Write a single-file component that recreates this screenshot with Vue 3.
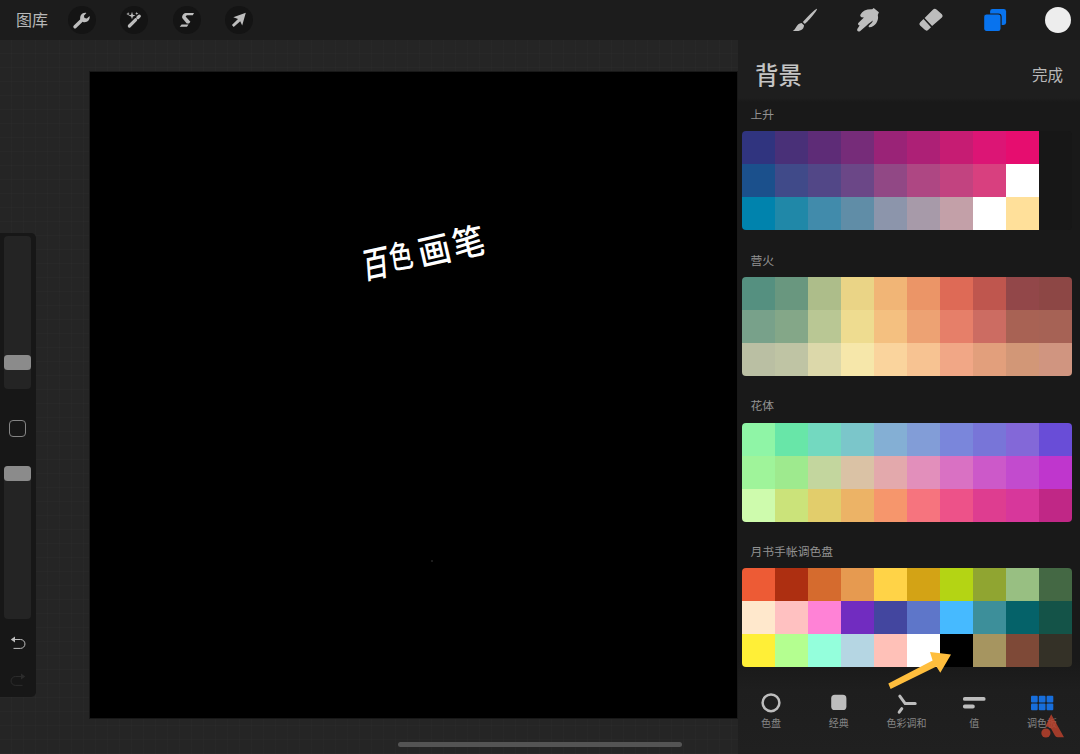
<template>
  <div class="app">
    <header class="topbar">
      <span class="gallery">图库</span>
      <div class="tools">
        <button class="tool" aria-label="操作">
          <svg viewBox="0 0 28 28">
            <path d="M7 20.8 14 14" stroke-width="3.4" stroke-linecap="round" />
            <path class="solid" d="M12.3 13.4C11.5 9.7 14.3 6 18.4 6.9L15.9 9.8 16.5 12.1 18.9 12.6 21.6 9.9C22.4 14 18.7 17 15 15.9Z" />
          </svg>
        </button>
        <button class="tool" aria-label="调整">
          <svg viewBox="0 0 28 28">
            <path d="M9.4 20 15.6 13.8M17.9 11.5 19.3 10.1" stroke-width="3.2" stroke-linecap="round" />
            <path class="solid" d="M12 5.8 12.9 8.7 15.5 9.6 12.9 10.5 12 13.2 11.1 10.5 8.4 9.6 11.1 8.7ZM8.1 6.1 8.6 7.4 9.8 7.9 8.6 8.4 8.1 9.6 7.6 8.4 6.3 7.9 7.6 7.4ZM16.8 5.7 17.2 7 18.4 7.5 17.2 8 16.8 9.1 16.3 8 15.2 7.5 16.3 7Z" />
          </svg>
        </button>
        <button class="tool" aria-label="选取">
          <svg viewBox="0 0 28 28">
            <path class="solid" d="M12.7 7.1H21L19.8 9.3H13.8L12.6 10.6 17.4 15.7 16 17.4H13.8L9.6 12.5C8.4 11.1 9.8 7.5 12.7 7.1ZM8.6 18.4H15.5L14 20.8H6.7Z" />
          </svg>
        </button>
        <button class="tool" aria-label="变换">
          <svg viewBox="0 0 28 28">
            <path class="solid" d="M20.8 6.8 17.2 19.6 15.2 15.2 8.7 20.9 6.9 19 13 12.9 8.3 11.2Z" />
          </svg>
        </button>
      </div>
      <div class="draw-tools">
        <svg viewBox="0 0 28 28">
          <path class="solid" d="M26 2.7C27 3.7 17.2 15.2 13.9 17.9L11.8 16C15 12.4 25 2 26 2.7ZM10.6 17 13 19.2C13 25 6 25.5 1.7 24.9 5.2 23.4 5 17.8 10.6 17Z" />
        </svg>
        <svg viewBox="0 0 28 28">
          <path class="solid" d="M6.5 8.6C8.4 4.8 12.6 3 18.2 3.3L19.7 2 24.9 6.2 23.8 8.9C25.3 14.6 21 20.8 15.5 21.3 14 21 14.6 19.3 16.2 18.2 18 16.8 18.9 15.4 18.6 14.5 17 16.2 14.8 17.4 13.2 19L6 25.2C4.2 26.2 2.6 24.9 3.3 23L5.6 19.4C3.8 19.4 3.5 17.6 4.8 16.6L9.9 11.5 7.4 11.2C6.2 10.7 6 9.6 6.5 8.6Z" />
        </svg>
        <svg viewBox="0 0 28 28">
          <path class="solid" d="M16.1 3.6Q17.8 2.1 19.5 3.6L24.9 8.3Q26.5 9.9 24.9 11.6L15.1 20.1 7.6 12.1ZM6.5 13.1 14 21.2 11.1 23.9Q9.5 25.4 7.8 23.8L3.1 19.5Q1.4 17.9 3.2 16.2Z" />
        </svg>
        <svg class="layers" viewBox="0 0 28 28">
          <rect x="9.1" y="3" width="16" height="16" rx="2.4" />
          <rect class="front" x="2.6" y="8" width="17.5" height="17.5" rx="2.8" />
        </svg>
        <span class="current-color"></span>
      </div>
    </header>

    <main class="workspace">
      <section class="stage">
        <aside class="sidebar">
          <div class="slider size"><span class="thumb"></span></div>
          <span class="modify"></span>
          <div class="slider opacity"><span class="thumb"></span></div>
          <svg class="undo" viewBox="0 0 18 16">
            <path d="M4 4.5H11.5A4.2 4.2 0 0 1 11.5 13.4H4.5" />
            <path class="solid" d="M1.8 4.5 6 1.4V7.6Z" />
          </svg>
          <svg class="undo redo" viewBox="0 0 18 16">
            <path d="M14 4.5H6.5A4.2 4.2 0 0 0 6.5 13.4H13.5" />
            <path class="solid" d="M16.2 4.5 12 1.4V7.6Z" />
          </svg>
        </aside>
        <div class="canvas">
          <div class="handwriting">
            <span v-for="(char, i) in '百色画笔'" :key="char" :class="'char-' + i">{{ char }}</span>
          </div>
          <i class="speck"></i>
        </div>
        <div class="home-bar"></div>
      </section>

      <section class="panel">
        <div class="panel-head">
          <h1>背景</h1>
          <span class="done">完成</span>
        </div>
        <div v-for="palette in palettes" :key="palette.name" class="palette">
          <h2>{{ palette.name }}</h2>
          <div class="swatches">
            <span v-for="(color, i) in palette.colors" :key="i" :style="{ background: color }"></span>
          </div>
        </div>
        <nav class="tabs">
          <div v-for="tab in tabs" :key="tab.name" class="tab">
            <svg viewBox="0 0 26 24" :class="tab.icon">
              <circle v-if="tab.icon === 'disc'" cx="13" cy="11.8" r="8.4" stroke-width="2.5" />
              <rect v-else-if="tab.icon === 'classic'" class="solid" x="5.2" y="3.8" width="15.2" height="15.2" rx="3.6" />
              <g v-else-if="tab.icon === 'harmony'" stroke-linecap="round" stroke-width="3">
                <path d="M6.8 5.1 12.2 12.6H22.2M8.8 17.6 6.2 21.2" />
              </g>
              <path v-else-if="tab.icon === 'value'" d="M3.8 7.9H22.7M3.8 15.5H11.9" stroke-linecap="round" stroke-width="3.8" />
              <g v-else class="solid">
                <rect v-for="n in 6" :key="n" :x="2 + ((n - 1) % 3) * 7.8" :y="n > 3 ? 12.5 : 4.7" width="6.7" height="6.7" rx="1" />
              </g>
            </svg>
            <span>{{ tab.name }}</span>
          </div>
        </nav>
      </section>
    </main>

    <svg class="pointer" viewBox="0 0 70 50">
      <path d="M5.3 40.4 49.6 17.6 47 9 68 11.5 57.3 29.8 53.4 23.6 7.6 46Z" />
    </svg>
    <svg class="watermark" viewBox="0 0 26 26">
      <circle cx="6.9" cy="20" r="4.6" />
      <path d="M12.2 1.2 25 24.2H18.6Q16.7 24.2 15.7 22.2L12.6 16.5Q11.4 14.2 6.5 13.2Z" />
    </svg>
  </div>
</template>

<script setup>
const palettes = [
  {
    name: '上升',
    colors: [
      '#30347f', '#493078', '#5e2c77', '#762c79', '#9a2377', '#ad2076', '#c61c73', '#dc1575', '#e60d6f', 'transparent',
      '#1b508c', '#404a89', '#524787', '#6b4787', '#914885', '#ae4783', '#c24380', '#d8407f', '#ffffff', 'transparent',
      '#0083ad', '#2088a8', '#418bab', '#608da7', '#8c95ab', '#a79aa9', '#c3a0a8', '#ffffff', '#ffe09a', 'transparent',
    ],
  },
  {
    name: '营火',
    colors: [
      '#559080', '#69977f', '#adbd8a', '#ead486', '#f1b576', '#eb9567', '#de6a56', '#bf564e', '#924749', '#8d4745',
      '#78a18a', '#84a788', '#b9c794', '#eedc90', '#f4c080', '#eda273', '#e67f69', '#cc6c62', '#a86254', '#a66255',
      '#babfa3', '#bfc4a4', '#dcd8aa', '#f6e7aa', '#fad49d', '#f7c392', '#f1a786', '#e29f7c', '#d29777', '#d09580',
    ],
  },
  {
    name: '花体',
    colors: [
      '#8ff5a6', '#68e6a8', '#73d9c0', '#7bc6ca', '#84afd4', '#829dd7', '#7a86db', '#7875d8', '#8368d8', '#694dd7',
      '#9ff49a', '#9eea8e', '#c3d69e', '#dac2a5', '#e3a9ac', '#e28fbb', '#d971c3', '#cc59c9', '#c24bce', '#bf36cd',
      '#cefbad', '#cbe37a', '#e2cd6b', '#ecb366', '#f6966c', '#f6747e', '#ed5289', '#de3d90', '#d7379b', '#c02786',
    ],
  },
  {
    name: '月书手帐调色盘',
    colors: [
      '#ed5b35', '#ad2f11', '#d56b2e', '#e69a50', '#ffd347', '#d3a315', '#b4d414', '#90a531', '#98bf82', '#446844',
      '#ffe8cc', '#ffc1c1', '#ff82d6', '#712cc0', '#43469f', '#5e76c9', '#46baff', '#3d8f9a', '#056269', '#145348',
      '#ffef37', '#b4ff90', '#94ffdc', '#b5d6e3', '#ffc1b8', '#ffffff', '#000000', '#a69560', '#7e4937', '#343127',
    ],
  },
]

const tabs = [
  { name: '色盘', icon: 'disc' },
  { name: '经典', icon: 'classic' },
  { name: '色彩调和', icon: 'harmony' },
  { name: '值', icon: 'value' },
  { name: '调色板', icon: 'grid' },
]
</script>

<style>
body {
  margin: 0;
  background: #252525;
}
</style>

<style scoped>
.app {
  position: relative;
  width: 1080px;
  height: 754px;
  overflow: hidden;
  color: #b8b8b8;
  font-family: "Noto Sans CJK SC", sans-serif;
}

svg {
  display: block;
  fill: none;
  stroke: #bdbdbd;
}

.solid {
  fill: #bdbdbd;
  stroke: none;
}

.topbar {
  display: flex;
  align-items: center;
  box-sizing: border-box;
  height: 40px;
  padding: 0 9px 0 16px;
  background: #1c1c1c;
}

.gallery {
  width: 52px;
  padding-bottom: 2px;
  font-size: 16px;
  line-height: 24px;
}

.tools {
  display: flex;
  gap: 24.3px;
}

.tool {
  width: 28px;
  height: 28px;
  padding: 0;
  border: none;
  border-radius: 50%;
  background: #141414;
}

.draw-tools {
  display: flex;
  align-items: center;
  gap: 35.3px;
  margin-left: auto;
}

.draw-tools svg {
  width: 28px;
  height: 28px;
}

.layers rect {
  fill: #0873ee;
  stroke: none;
}

.layers .front {
  stroke: #1c1c1c;
  stroke-width: 1.2;
}

.current-color {
  width: 26px;
  height: 26px;
  margin-left: 1px;
  border-radius: 50%;
  background: #ededed;
}

.workspace {
  display: flex;
  height: 714px;
}

.stage {
  position: relative;
  display: flex;
  align-items: flex-start;
  width: 738px;
  background:
    repeating-linear-gradient(90deg, transparent 0 11px, rgba(255, 255, 255, 0.012) 11px 12px),
    repeating-linear-gradient(transparent 0 13px, rgba(255, 255, 255, 0.014) 13px 14px),
    #252525;
}

.sidebar {
  display: flex;
  flex-direction: column;
  align-items: center;
  box-sizing: border-box;
  width: 36px;
  height: 464px;
  margin-top: 193px;
  padding: 3px 1px 0 0;
  border-radius: 0 5px 5px 0;
  background: #171717;
}

.slider {
  display: flex;
  align-items: flex-start;
  width: 27px;
  height: 153px;
  border-radius: 4px;
  background: #242424;
}

.thumb {
  width: 27px;
  height: 15px;
  border-radius: 3.5px;
  background: #8b8b8b;
}

.size .thumb {
  margin-top: 119px;
}

.modify {
  box-sizing: border-box;
  width: 17px;
  height: 17px;
  margin: 31px 0 29px;
  border: 1px solid #858585;
  border-radius: 4px;
}

.undo {
  width: 18px;
  height: 16px;
  margin-top: 16px;
}

.redo {
  margin-top: 21px;
  opacity: 0.12;
}

.canvas {
  position: relative;
  width: 647px;
  height: 646px;
  margin: 31.5px 0 0 54px;
  outline: 1px solid #181818;
  background: #000;
}

.handwriting {
  position: absolute;
  top: 149px;
  left: 269px;
  display: flex;
  color: #fff;
  font-size: 34px;
  font-weight: 500;
  line-height: 40px;
}

.handwriting span {
  width: 32px;
}

.char-0 {
  transform: translate(0, 21px) rotate(-12deg) skewX(-8deg) scale(0.78, 1.05);
}

.char-1 {
  transform: translate(-7px, 14px) rotate(-9deg) scale(0.7, 0.93);
}

.char-2 {
  transform: translate(-6px, 8px) rotate(-13deg) scale(0.96, 1.03);
}

.char-3 {
  transform: translate(-4px, 0) rotate(-12deg) scale(0.95, 1.04);
}

.speck {
  position: absolute;
  top: 488px;
  left: 341px;
  width: 2px;
  height: 2px;
  background: #1c1c1c;
}

.home-bar {
  position: absolute;
  bottom: 7px;
  left: 398px;
  width: 284px;
  height: 5px;
  border-radius: 3px;
  background: #545454;
}

.panel {
  box-sizing: border-box;
  width: 342px;
  padding: 0 8px 0 4px;
  background: linear-gradient(#1e1e1e 0, #1e1e1e 58px, #191919 62px, #191919 620px, #1e1e1e 650px, #202020);
}

.panel-head {
  display: flex;
  align-items: center;
  justify-content: space-between;
  height: 62px;
  padding: 5px 9px 0 13px;
  box-sizing: border-box;
}

h1 {
  margin: 0;
  color: #c4c4c4;
  font-size: 23.5px;
  font-weight: 500;
  line-height: 30px;
}

.done {
  font-size: 15.5px;
}

.palette {
  height: 145.7px;
}

h2 {
  margin: 0;
  padding-left: 8.5px;
  color: #929292;
  font-size: 11.8px;
  font-weight: 400;
  line-height: 23px;
  height: 29.3px;
}

.swatches {
  display: grid;
  grid-template: repeat(3, 33px) / repeat(10, 33px);
  overflow: hidden;
  width: 330px;
  border-radius: 4px;
  background: #171717;
}

.tabs {
  display: flex;
  margin-left: -5px;
  padding-top: 6px;
}

.tab {
  display: flex;
  flex-direction: column;
  align-items: center;
  width: 67.8px;
  flex-shrink: 0;
  color: #858585;
  font-size: 10px;
  line-height: 16px;
}

.tab svg {
  width: 26px;
  height: 24px;
}

.grid .solid {
  fill: #176edc;
}

.pointer {
  position: absolute;
  top: 643px;
  left: 883px;
  width: 70px;
  height: 50px;
}

.pointer path {
  fill: #ffbe3d;
  stroke: none;
}

.watermark {
  position: absolute;
  top: 713px;
  left: 1039px;
  width: 26px;
  height: 26px;
  opacity: 0.85;
}

.watermark * {
  fill: #b8412c;
  stroke: none;
}
</style>
